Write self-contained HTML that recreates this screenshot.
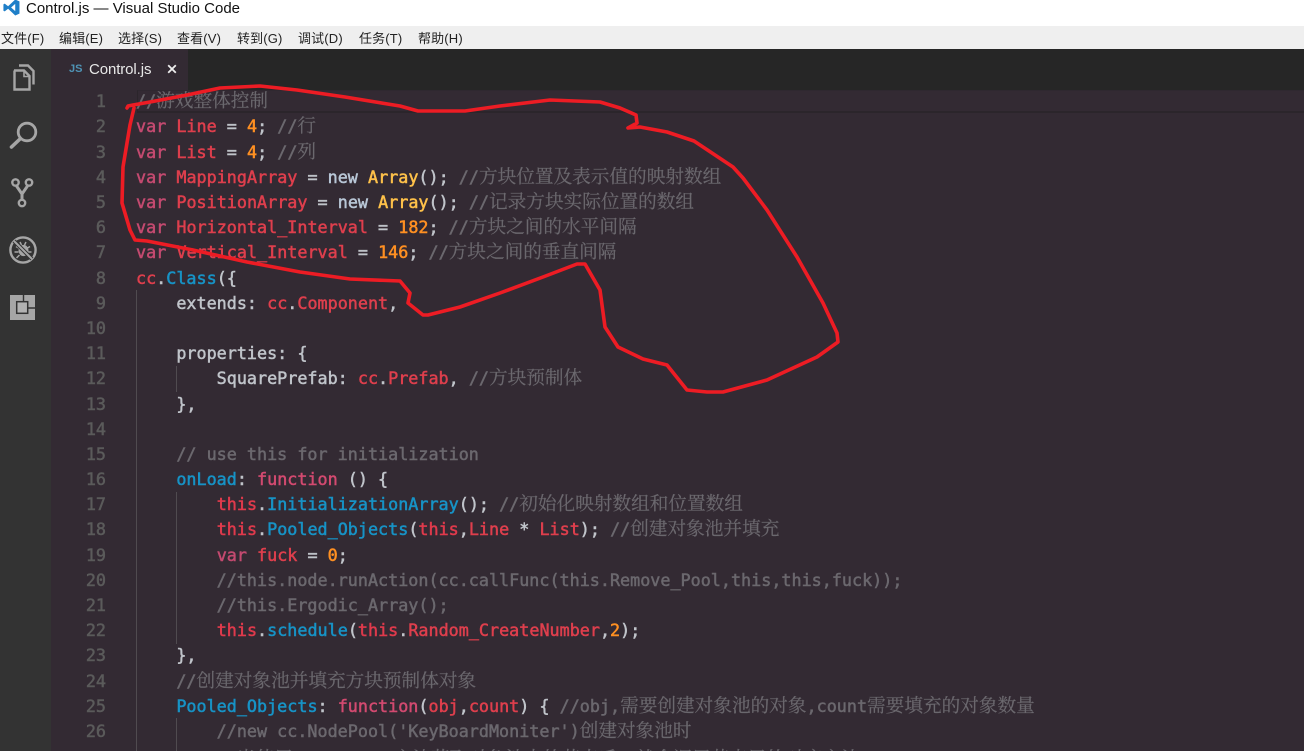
<!DOCTYPE html>
<html><head><meta charset="utf-8"><title>Control.js — Visual Studio Code</title>
<style>
html,body{margin:0;padding:0;background:#332a33;}
#r{position:relative;width:1304px;height:751px;overflow:hidden;background:#332a33;font-family:"Liberation Sans","Noto Sans CJK SC",sans-serif;}
.a{position:absolute;}
#title{left:26px;top:0;font-size:15px;line-height:18px;color:#111;white-space:pre;}
.m{position:absolute;top:27px;line-height:23px;font-size:13px;color:#222;white-space:pre;letter-spacing:.15px;}
#code{left:136px;top:89.25px;font-family:"DejaVu Sans Mono",monospace;font-size:16.75px;color:#c0c4ca;-webkit-text-stroke:.5px currentColor;}
#code div{height:25.2px;line-height:25.2px;white-space:pre;}
#nums{left:60px;width:46px;top:89.25px;text-align:right;font-family:"DejaVu Sans Mono",monospace;font-size:16.75px;color:#5b5b5b;-webkit-text-stroke:.5px currentColor;}
#nums div{height:25.2px;line-height:25.2px;}
i{font-style:normal;font-family:"Noto Serif CJK SC",serif;font-size:18.65px;line-height:20px;-webkit-text-stroke:.2px currentColor;}
.k{color:#c44a70}.v{color:#df3f4d}.n{color:#ff9022}.c{color:#6b686e}.y{color:#ffc24a}.b{color:#1793c6}.w{color:#b8c6d6}.f{color:#d34a70}.t{color:#e03a4c}.p{color:#c9cdd2}
</style></head><body>
<div id="r">
<div class="a" style="left:0;top:0;width:1304px;height:26px;background:#fff"></div>
<svg class="a" style="left:3px;top:-1px" width="17" height="17" viewBox="0 0 16 16"><path d="M11.5 0.5L15.5 2.2V13.8L11.5 15.5L4.8 9.2L1.6 11.6L0.4 11V5L1.6 4.4L4.8 6.8ZM11.5 4.6L7.6 8L11.5 11.4Z" fill="#1f7fc8" fill-rule="evenodd"/></svg>
<div class="a" id="title">Control.js — Visual Studio Code</div>
<div class="a" style="left:0;top:26px;width:1304px;height:23px;background:#efefef"></div>
<span class="m" style="left:1px">文件(F)</span><span class="m" style="left:59px">编辑(E)</span><span class="m" style="left:118px">选择(S)</span><span class="m" style="left:177px">查看(V)</span><span class="m" style="left:237px">转到(G)</span><span class="m" style="left:298px">调试(D)</span><span class="m" style="left:359px">任务(T)</span><span class="m" style="left:418px">帮助(H)</span>

<div class="a" style="left:0;top:49px;width:51px;height:702px;background:#333"></div>
<div class="a" style="left:51px;top:49px;width:1253px;height:41px;background:#262626"></div>
<div class="a" style="left:51px;top:49px;width:137px;height:41px;background:#332a33"></div>
<div class="a" style="left:69px;top:62px;font-size:11px;font-weight:bold;color:#4f93b5;line-height:14px">JS</div>
<div class="a" style="left:89px;top:60px;font-size:15px;color:#e8e8e8;line-height:20px;letter-spacing:-.1px">Control.js</div>
<svg class="a" style="left:167px;top:64px" width="10" height="10" viewBox="0 0 10 10"><path d="M1.2 1.2L8.8 8.8M8.8 1.2L1.2 8.8" stroke="#eee" stroke-width="1.8"/></svg>

<svg class="a" style="left:0;top:49px" width="51" height="290" viewBox="0 49 51 290" fill="none" stroke="#a6a6a6">
<path d="M14 70.5H24L29.5 76V89.5H14.5V70.5Z" stroke-width="2.4"/><path d="M24 71V76.5H29.5" stroke-width="1.6"/><path d="M19 65.5H28L33.5 71V84.5" stroke-width="2.4"/>
<circle cx="27" cy="132" r="8.8" stroke-width="2.8"/><path d="M20 139L11.5 147" stroke-width="3.6" stroke-linecap="round"/>
<circle cx="15.5" cy="182.5" r="3.2" stroke-width="2.4"/><circle cx="29" cy="182.5" r="3.2" stroke-width="2.4"/><circle cx="22" cy="203" r="3.2" stroke-width="2.4"/><path d="M16.5 186L22 194L27.5 186M22 193V200" stroke-width="3"/>
<circle cx="23" cy="250" r="12.6" stroke-width="2.4"/><ellipse cx="23.5" cy="250.5" rx="5" ry="5.6" fill="#a6a6a6" stroke="none"/><path d="M16 246.5L19.5 248.5M30 246.5L26.5 248.5M14.5 252H18.5M31.5 252H27.5M16.5 258L19.5 255M29.5 258L26.5 255M20 242L21.5 245M26 242L24.5 245" stroke-width="1.5"/><path d="M14 241L32 259" stroke="#333" stroke-width="4"/><path d="M14 241L32 259" stroke-width="2"/>
<rect x="10" y="295" width="25" height="25" fill="#a6a6a6" stroke="none"/><rect x="16.7" y="301.7" width="11" height="11.6" fill="#b2b2b2" stroke="#333" stroke-width="1.5"/><path d="M23.5 295V301M28 308H35" stroke="#333" stroke-width="1.4"/>
</svg>

<div class="a" style="left:137px;top:90px;width:1167px;height:23px;box-sizing:border-box;border-top:1px solid #2f2830;border-bottom:2px solid #2b252b;border-left:1px solid #2b252b"></div>
<div class="a" style="left:136px;top:290px;width:1px;height:461px;background:#504b50"></div>
<div class="a" style="left:176px;top:366px;width:1px;height:26px;background:#504b50"></div>
<div class="a" style="left:176px;top:492px;width:1px;height:152px;background:#504b50"></div>
<div class="a" style="left:176px;top:718px;width:1px;height:33px;background:#504b50"></div>

<div class="a" id="nums"><div>1</div><div>2</div><div>3</div><div>4</div><div>5</div><div>6</div><div>7</div><div>8</div><div>9</div><div>10</div><div>11</div><div>12</div><div>13</div><div>14</div><div>15</div><div>16</div><div>17</div><div>18</div><div>19</div><div>20</div><div>21</div><div>22</div><div>23</div><div>24</div><div>25</div><div>26</div><div style="position:relative;top:3px">27</div></div>

<div class="a" id="code">
<div class="c">//<i>游戏整体控制</i></div>
<div><span class="k">var</span> <span class="v">Line</span> = <span class="n">4</span>; <span class="c">//<i>行</i></span></div>
<div><span class="k">var</span> <span class="v">List</span> = <span class="n">4</span>; <span class="c">//<i>列</i></span></div>
<div><span class="k">var</span> <span class="v">MappingArray</span> = <span class="w">new</span> <span class="y">Array</span>(); <span class="c">//<i>方块位置及表示值的映射数组</i></span></div>
<div><span class="k">var</span> <span class="v">PositionArray</span> = <span class="w">new</span> <span class="y">Array</span>(); <span class="c">//<i>记录方块实际位置的数组</i></span></div>
<div><span class="k">var</span> <span class="v">Horizontal_Interval</span> = <span class="n">182</span>; <span class="c">//<i>方块之间的水平间隔</i></span></div>
<div><span class="k">var</span> <span class="v">Vertical_Interval</span> = <span class="n">146</span>; <span class="c">//<i>方块之间的垂直间隔</i></span></div>
<div><span class="v">cc</span>.<span class="b">Class</span>({</div>
<div>    extends: <span class="v">cc</span>.<span class="v">Component</span>,</div>
<div> </div>
<div>    properties: {</div>
<div>        SquarePrefab: <span class="v">cc</span>.<span class="v">Prefab</span>, <span class="c">//<i>方块预制体</i></span></div>
<div>    },</div>
<div> </div>
<div class="c">    // use this for initialization</div>
<div>    <span class="b">onLoad</span>: <span class="f">function</span> () {</div>
<div>        <span class="t">this</span>.<span class="b">InitializationArray</span>(); <span class="c">//<i>初始化映射数组和位置数组</i></span></div>
<div>        <span class="t">this</span>.<span class="b">Pooled_Objects</span>(<span class="t">this</span>,<span class="v">Line</span> * <span class="v">List</span>); <span class="c">//<i>创建对象池并填充</i></span></div>
<div>        <span class="k">var</span> <span class="v">fuck</span> = <span class="n">0</span>;</div>
<div class="c">        //this.node.runAction(cc.callFunc(this.Remove_Pool,this,this,fuck));</div>
<div class="c">        //this.Ergodic_Array();</div>
<div>        <span class="t">this</span>.<span class="b">schedule</span>(<span class="t">this</span>.<span class="v">Random_CreateNumber</span>,<span class="n">2</span>);</div>
<div>    },</div>
<div class="c">    //<i>创建对象池并填充方块预制体对象</i></div>
<div>    <span class="b">Pooled_Objects</span>: <span class="f">function</span>(<span class="v">obj</span>,<span class="v">count</span>) { <span class="c">//obj,<i>需要创建对象池的对象</i>,count<i>需要填充的对象数量</i></span></div>
<div class="c">        //new cc.NodePool('KeyBoardMoniter')<i>创建对象池时</i></div>
<div class="c" style="position:relative;top:3px">        //<i>当使用</i>pool.get()<i>方法获取对象池中的节点后，就会调用节点里的对应方法</i></div>
</div>

<svg class="a" style="left:0;top:0;pointer-events:none" width="1304" height="751" viewBox="0 0 1304 751" fill="none">
<path d="M127 108L128 106L133 105L150 102L187 95L220 88L260 86L297 90L345 97L400 106L418 111L465 111L500 106L550 100L600 102L620 108L636 115L637 123L628 128L640 127L667 132L694 141L733 167L743 178L767 210L797 257L823 303L837 333L838 342L817 357L767 380L723 392L707 392L687 390L667 365L643 359L618 347L605 327L600 290L585 264L577 264L543 277L500 293L460 307L428 315L423 315L408 303L410 293L405 287L400 281L350 279L300 272L247 262L193 250L147 241L135 240L130 230L122 203L123 167L130 125L134 108" stroke="#ed1c24" stroke-width="3.6" stroke-linejoin="round" stroke-linecap="round"/>
</svg>
</div>
</body></html>
